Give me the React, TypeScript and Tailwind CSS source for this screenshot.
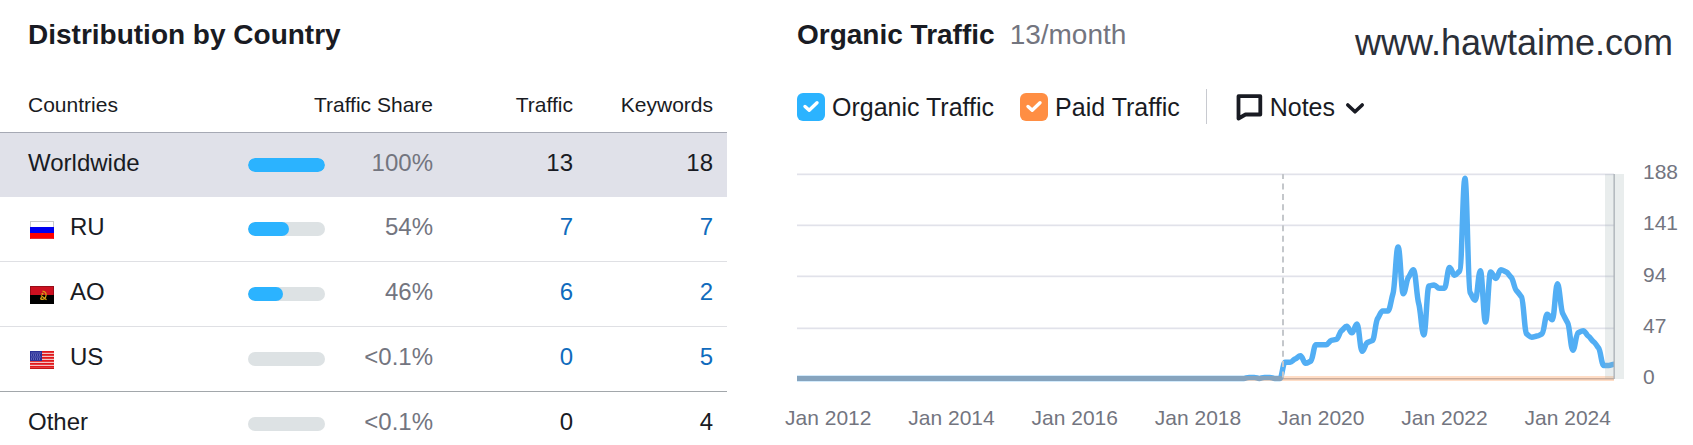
import React from "react";

type Row = {
  code: string;
  flag?: React.ReactNode;
  fill: number;
  share: string;
  traffic: string;
  keywords: string;
  linked?: boolean;
};

const FlagRU = () => (
  <svg width="24" height="18" viewBox="0 0 24 18" aria-hidden="true">
    <rect width="24" height="18" fill="#c9c9c9" />
    <rect x="1" y="1" width="22" height="5" fill="#fff" />
    <rect y="6" width="24" height="6" fill="#0000f0" />
    <rect y="12" width="24" height="6" fill="#f00" />
    <rect x=".5" y="17" width="23" height="1" fill="#e83030" />
  </svg>
);

const FlagAO = () => (
  <svg width="24" height="18" viewBox="0 0 24 18" aria-hidden="true">
    <rect width="24" height="9" fill="#cc1020" />
    <rect y="9" width="24" height="9" fill="#000" />
    <path d="M12.500 5.200c3.400.2 4.500 3.400 3 6.200-1 1.700-3.200 2.300-5 1.500M11 9.500l5.500 4.200M10.500 13.200l1-2.200" fill="none" stroke="#d9a015" strokeWidth="1.300" />
    <circle cx="12.500" cy="7.800" r="1.100" fill="#d9a015" />
    <path d="M.5.500h23v17H.5z" fill="none" stroke="#000" strokeOpacity=".25" />
  </svg>
);

const FlagUS = () => (
  <svg width="24" height="18" viewBox="0 0 24 18" aria-hidden="true">
    <rect width="24" height="18" fill="#f3c4c4" />
    {[0, 3, 6, 9, 12, 15].map((y) => (
      <rect key={y} y={y} width="24" height="1.800" fill="#e0181c" />
    ))}
    <rect y="17" width="24" height="1" fill="#c01818" />
    <rect width="12" height="10" fill="#2a2f96" />
    {[2, 4, 6, 8].map((y) =>
      [1, 3, 5, 7, 9].map((x) => (
        <rect key={`${x}-${y}`} x={x + (y % 4 ? 0.5 : 0)} y={y - 0.5} width="1" height="1" fill="#8f93d6" />
      )),
    )}
  </svg>
);

const rows: Row[] = [
  { code: "Worldwide", fill: 100, share: "100%", traffic: "13", keywords: "18" },
  { code: "RU", flag: <FlagRU />, fill: 54, share: "54%", traffic: "7", keywords: "7", linked: true },
  { code: "AO", flag: <FlagAO />, fill: 46, share: "46%", traffic: "6", keywords: "2", linked: true },
  { code: "US", flag: <FlagUS />, fill: 0, share: "<0.1%", traffic: "0", keywords: "5", linked: true },
  { code: "Other", fill: 0, share: "<0.1%", traffic: "0", keywords: "4" },
];

const rowStyles = [
  "h-[65px] bg-[#e0e1e9] [&>td]:border-t [&>td]:border-[#a6a9b4]",
  "h-16",
  "h-[65px] [&>td]:border-t [&>td]:border-[#dfe0e4]",
  "h-[65px] [&>td]:border-t [&>td]:border-[#dfe0e4]",
  "[&>td]:border-t [&>td]:border-[#a2a7ab] [&>td]:pt-4 [&>td]:align-top",
];

function Value({ text, linked }: { text: string; linked?: boolean }) {
  return linked ? (
    <a href="#details" className="text-[#0f6bbd]">
      {text}
    </a>
  ) : (
    <>{text}</>
  );
}

function CountryTable() {
  return (
    <section>
      <h2 className="pt-[17px] pl-7 text-[28px] leading-9 font-bold">Distribution by Country</h2>
      <table className="mt-[27px] w-full table-fixed border-separate border-spacing-0">
        <colgroup>
          <col className="w-[32%]" />
          <col />
          <col className="w-[140px]" />
          <col className="w-[140px]" />
        </colgroup>
        <thead>
          <tr className="h-[52px] text-[21px] leading-6">
            <th className="pb-[2px] pl-7 text-left font-normal">Countries</th>
            <th className="pr-[14px] pb-[2px] text-right font-normal">Traffic Share</th>
            <th className="pr-[14px] pb-[2px] text-right font-normal">Traffic</th>
            <th className="pr-[14px] pb-[2px] text-right font-normal">Keywords</th>
          </tr>
        </thead>
        <tbody>
          {rows.map((r, i) => (
            <tr key={r.code} className={`text-2xl leading-7 ${rowStyles[i]}`}>
              <td className="pl-7">
                <div className="flex items-center">
                  {r.flag && <span className="mt-[2px] mr-4 ml-[2px]">{r.flag}</span>}
                  <span className="pb-1">{r.code}</span>
                </div>
              </td>
              <td className="pr-[14px]">
                <div className="flex items-center justify-between">
                  <span className="ml-[15px] h-[14px] w-[77px] overflow-hidden rounded-full bg-[#dde2e4]">
                    <span className="block h-full rounded-full bg-[#2bb3ff]" style={{ width: `${r.fill}%` }} />
                  </span>
                  <span className="pb-1 text-[#73757f]">{r.share}</span>
                </div>
              </td>
              <td className="pr-[14px] pb-1 text-right">
                <Value text={r.traffic} linked={r.linked} />
              </td>
              <td className="pr-[14px] pb-1 text-right">
                <Value text={r.keywords} linked={r.linked} />
              </td>
            </tr>
          ))}
        </tbody>
      </table>
    </section>
  );
}

function Toggle({ label, color }: { label: string; color: string }) {
  return (
    <label className="flex items-center gap-[7px]">
      <span className="grid">
        <input
          type="checkbox"
          defaultChecked
          className={`peer col-start-1 row-start-1 size-7 appearance-none rounded-md border border-gray-300 checked:border-0 ${color}`}
        />
        <svg
          viewBox="0 0 28 28"
          className="pointer-events-none invisible col-start-1 row-start-1 size-7 peer-checked:visible"
          fill="none"
          stroke="#fff"
          strokeWidth="3.400"
          strokeLinecap="round"
          strokeLinejoin="round"
          aria-hidden="true"
        >
          <path d="M8 13.500l4.200 3.800L20 9.800" />
        </svg>
      </span>
      {label}
    </label>
  );
}

/* Monthly organic visits, oldest first; the last one is the current month. */
const visits = [
  0, 1, 1, 0, 1, 1, 0, 0, 15, 15, 18, 21, 14, 16, 31, 31, 31, 35, 36, 44, 48, 42, 50, 25, 33, 35, 55, 62, 62, 78, 121,
  78, 93, 100, 69, 40, 85, 86, 83, 83, 102, 95, 99, 184, 79, 72, 99, 52, 98, 92, 100, 98, 93, 81, 75, 41, 38, 39, 41,
  59, 54, 87, 60, 51, 26, 42, 44, 39, 34, 28, 12, 12, 13,
];

const RIGHT = 817;
const BASE = 218.5;
const STEP = 5.14;
const SCALE = 204.5 / 188;

/* Monotone cubic through the monthly points, eased at each of them. */
function trafficPath(): string {
  const pts = visits.map((v, i) => [RIGHT - (visits.length - 1 - i) * STEP, BASE - v * SCALE]);
  const slope = (i: number) => (pts[i + 1][1] - pts[i][1]) / STEP;
  const tangent = pts.map((_, i) => {
    if (i === 0 || i === pts.length - 1) return 0;
    const a = slope(i - 1);
    const b = slope(i);
    if (a * b <= 0) return 0;
    return Math.sign(a) * Math.min(Math.abs(a), Math.abs(b), Math.abs(a + b) / 4);
  });
  let d = `M0 ${BASE}H${pts[0][0].toFixed(2)}`;
  for (let i = 1; i < pts.length; i++) {
    const [x0, y0] = pts[i - 1];
    const [x1, y1] = pts[i];
    const h = STEP * 0.4;
    d += `C${(x0 + h).toFixed(2)} ${(y0 + tangent[i - 1] * h).toFixed(2)} ${(x1 - h).toFixed(2)} ${(y1 - tangent[i] * h).toFixed(2)} ${x1.toFixed(2)} ${y1.toFixed(2)}`;
  }
  return d;
}

function TrafficChart() {
  return (
    <div className="mt-9">
      <div className="flex gap-[19px]">
        <svg viewBox="0 0 827 229" className="h-auto min-w-0 flex-1" role="img" aria-label="Organic and paid traffic by month">
          <g fill="#e1e2ea">
            {[13, 64, 115, 167].map((y) => (
              <rect key={y} y={y + 0.5} width="817" height="1.700" />
            ))}
          </g>
          <rect y="218" width="817" height="1.500" fill="#b5b8c0" />
          <path d={trafficPath()} fill="none" stroke="#52aef4" strokeWidth="5.500" strokeLinejoin="round" />
          <path d={`M0 ${BASE}H817`} stroke="#ff8e43" strokeOpacity=".3" strokeWidth="5" />
          <path d="M486 14V219" stroke="#c4c7cb" strokeWidth="2" strokeDasharray="6 4.450" strokeDashoffset="1" />
          <rect x="808" y="14" width="19" height="205" fill="#a2b0b0" fillOpacity=".23" />
          <rect x="816.500" y="14" width="1.300" height="205" fill="#a9afb5" />
        </svg>
        <div className="flex w-[50px] flex-col justify-between text-[21px] leading-6 text-[#73757f]">
          {["188", "141", "94", "47", "0"].map((t) => (
            <span key={t}>{t}</span>
          ))}
        </div>
      </div>
      <div className="mt-[17px] mr-[82px] -ml-3 flex justify-between text-[21px] leading-6 text-[#73757f]">
        {["2012", "2014", "2016", "2018", "2020", "2022", "2024"].map((y) => (
          <span key={y}>Jan {y}</span>
        ))}
      </div>
    </div>
  );
}

export default function App() {
  return (
    <main className="grid grid-cols-[727fr_896fr] gap-[70px] overflow-hidden bg-white font-['Liberation_Sans',Arial,sans-serif] text-[#191b23]">
      <CountryTable />
      <section>
        <header className="flex items-start justify-between pt-[17px]">
          <div className="flex items-baseline gap-[15px] leading-9">
            <h2 className="text-[28px] font-bold">Organic Traffic</h2>
            <span className="text-[28px] text-[#73757f]">13/month</span>
          </div>
          <span className="mt-1 mr-5 text-4xl leading-[44px] text-[#2b2f38]">www.hawtaime.com</span>
        </header>
        <div className="mt-6 flex items-center text-[25px] leading-7">
          <div className="flex gap-[26px]">
            <Toggle label="Organic Traffic" color="checked:bg-[#2bb3ff]" />
            <Toggle label="Paid Traffic" color="checked:bg-[#ff8e43]" />
          </div>
          <span className="ml-[26px] h-[35px] w-px bg-[#c8cad0]" />
          <button type="button" className="ml-7 flex items-center">
            <svg width="28" height="28" viewBox="0 0 28 28" fill="none" stroke="#191b23" strokeWidth="3.800" strokeLinejoin="round" aria-hidden="true">
              <path d="M3.500 3.200H25.300V21.500H10.500L3.500 25.500Z" />
            </svg>
            <span className="ml-[7px]">Notes</span>
            <svg className="ml-[10px]" width="20" height="20" viewBox="0 0 20 20" fill="none" stroke="#191b23" strokeWidth="3.600" strokeLinecap="round" strokeLinejoin="round" aria-hidden="true">
              <path d="M2.800 8l7.200 6.800L17.200 8" />
            </svg>
          </button>
        </div>
        <TrafficChart />
      </section>
    </main>
  );
}
